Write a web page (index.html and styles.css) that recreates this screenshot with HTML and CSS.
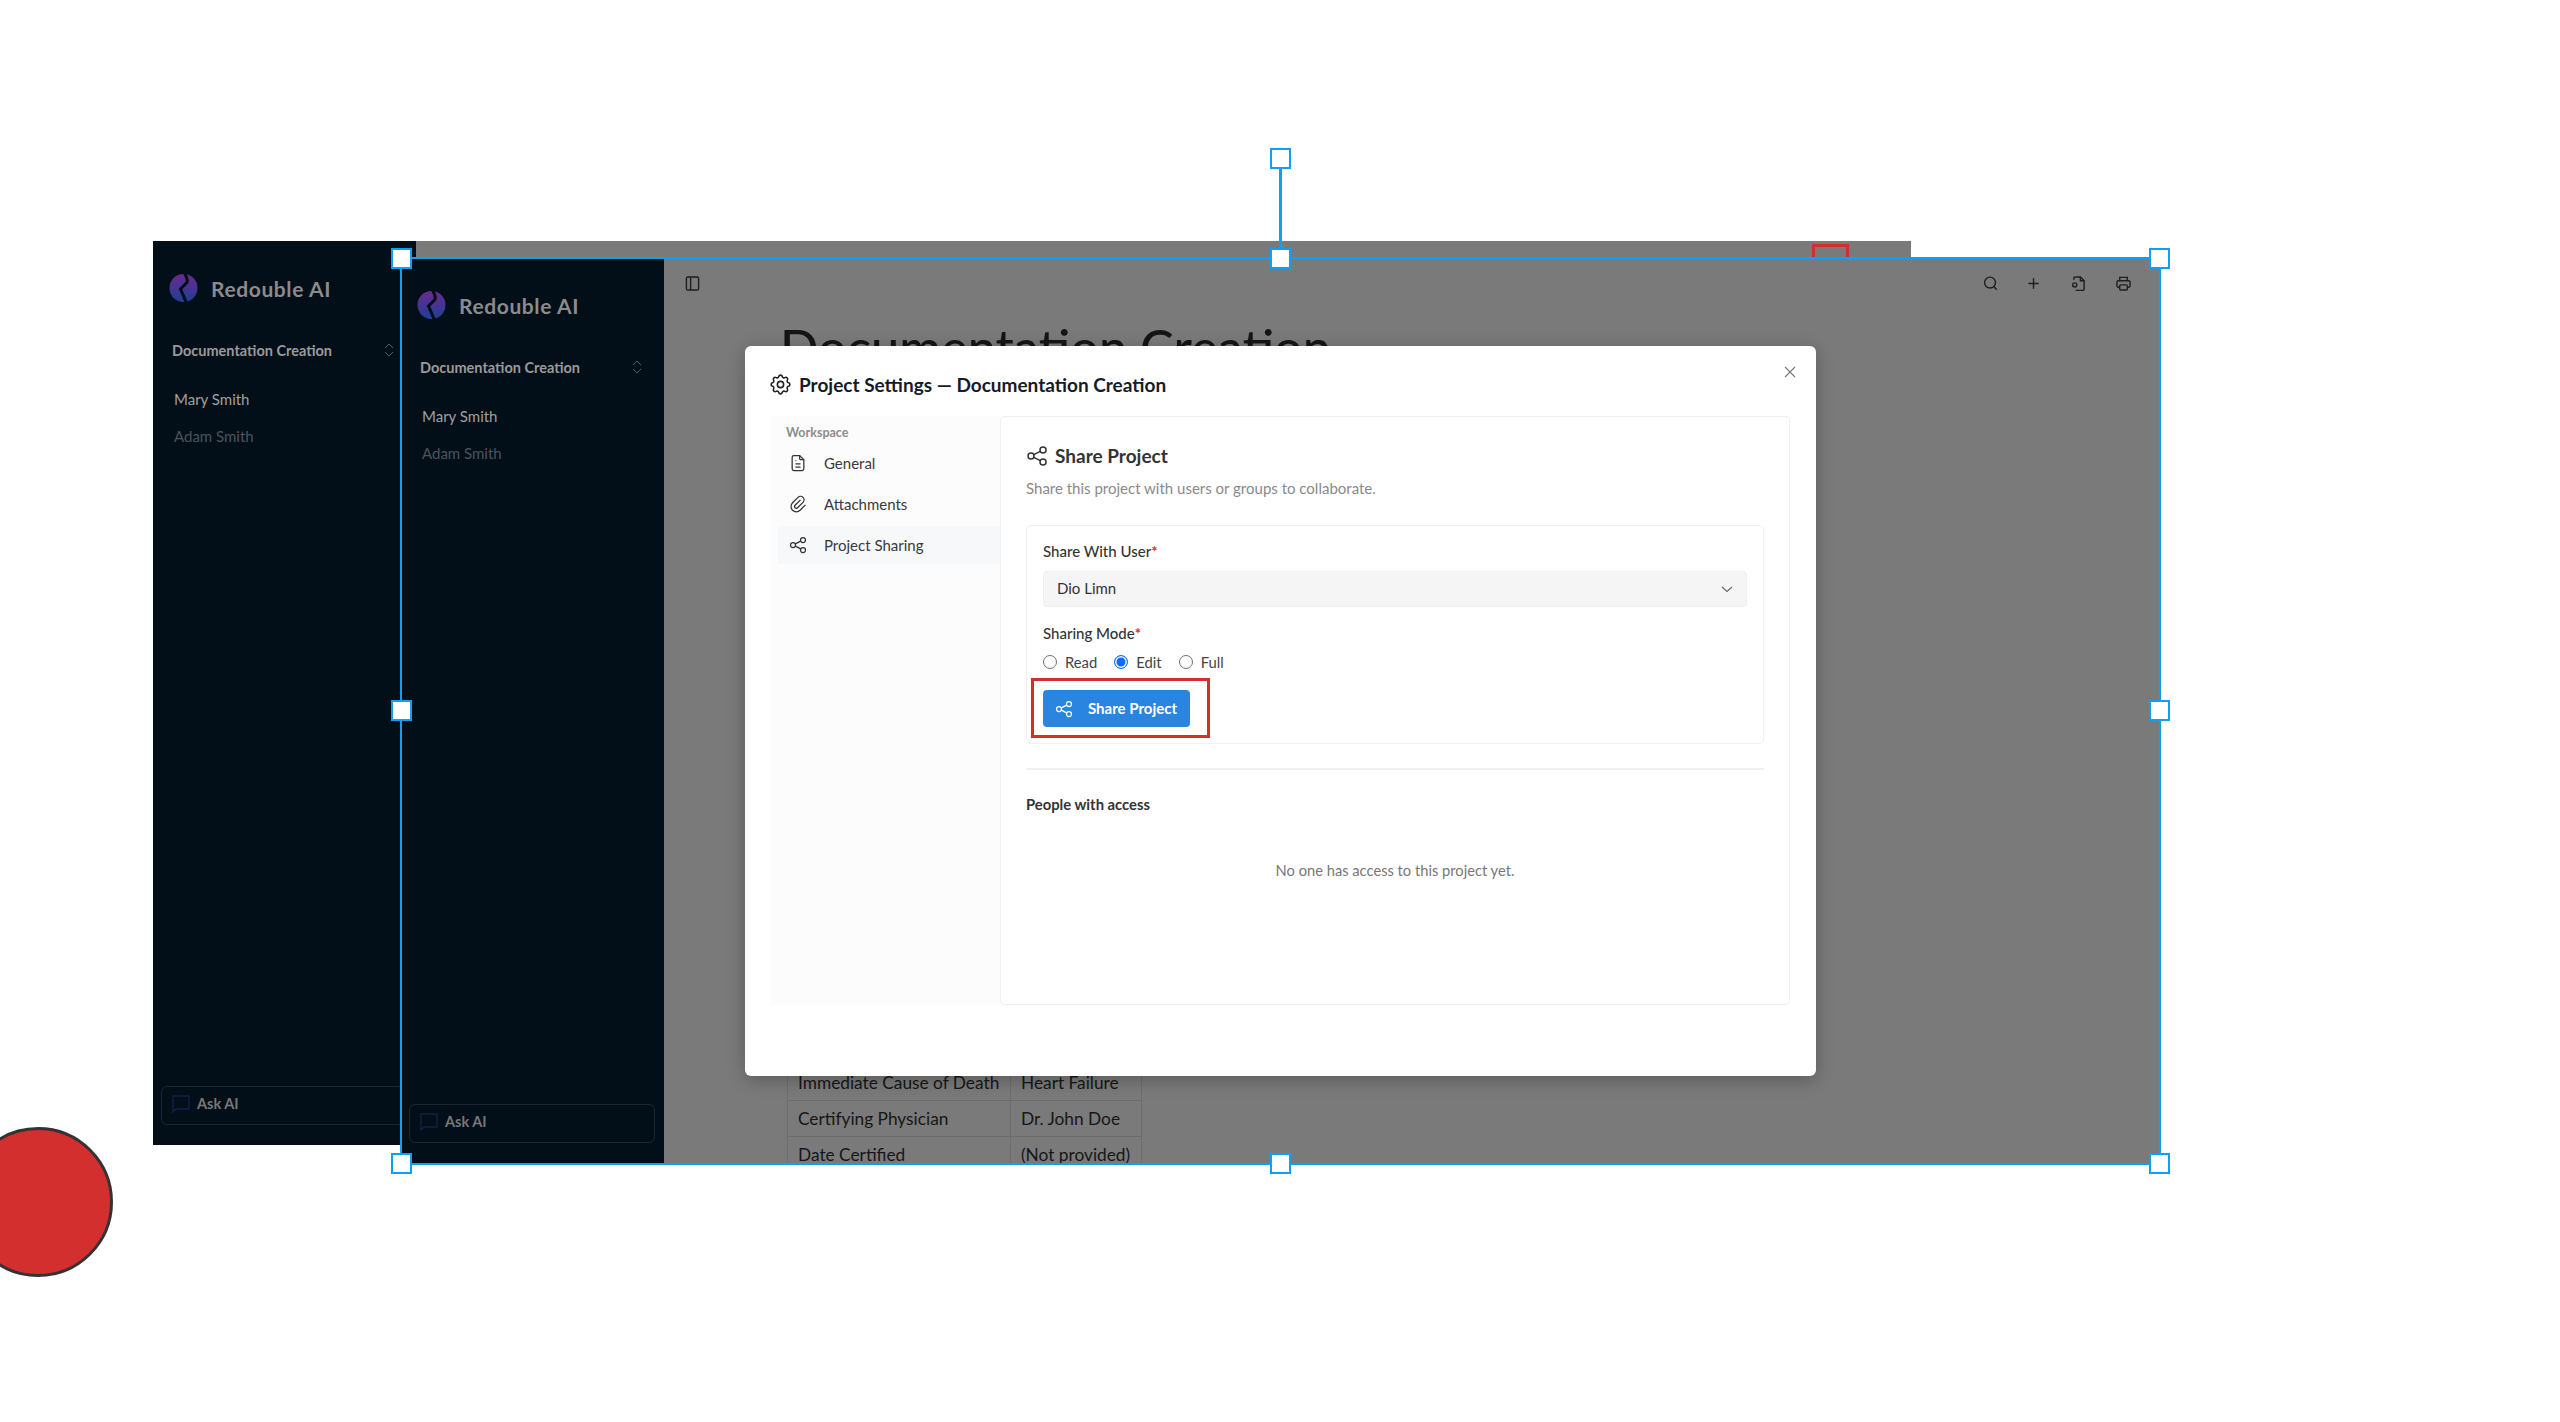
FILE: index.html
```html
<!DOCTYPE html>
<html lang="en">
<head>
<meta charset="utf-8">
<title>Project Settings</title>
<link rel="stylesheet" href="styles.css">
</head>
<body>
<svg class="defs" width="0" height="0" aria-hidden="true">
  <defs>
    <linearGradient id="logo-grad" x1="0" y1="0" x2="0" y2="1">
      <stop offset="0" stop-color="#6a2a8e"/>
      <stop offset="1" stop-color="#1f3f95"/>
    </linearGradient>
    <symbol id="share" viewBox="0 0 24 24">
      <circle cx="6" cy="12" r="3"/><circle cx="18" cy="6" r="3"/><circle cx="18" cy="18" r="3"/>
      <path d="M8.700 10.700l6.600-3.400M8.700 13.300l6.600 3.400"/>
    </symbol>
    <symbol id="logo" viewBox="0 0 28 28">
      <circle cx="14" cy="14" r="14" fill="url(#logo-grad)"/>
      <path d="M15 -1C17 3 19 7 17 9L11 15L17 29" fill="none" stroke="#020f18" stroke-width="3"/>
    </symbol>
    <symbol id="chat" viewBox="0 0 18 18">
      <path d="M1 1h16v13H4l-3 3z" fill="none" stroke="#1a1c4a" stroke-width="1.300"/>
    </symbol>
    <symbol id="updown" viewBox="0 0 10 14">
      <path d="M1 5l4-4 4 4M1 9l4 4 4-4" fill="none" stroke="#555b61" stroke-width="1"/>
    </symbol>
  </defs>
</svg>

<main class="canvas">
  <section class="shot shot-back">
    <aside class="sidebar">
      <div class="brand"><svg class="logo"><use href="#logo"/></svg><span>Redouble AI</span></div>
      <div class="project"><span>Documentation Creation</span><svg class="updown"><use href="#updown"/></svg></div>
      <ul class="people"><li>Mary Smith</li><li class="dim">Adam Smith</li></ul>
      <div class="ask"><svg class="chat"><use href="#chat"/></svg><span>Ask AI</span></div>
    </aside>
    <div class="pane">
      <div class="red-mark"></div>
    </div>
  </section>

  <section class="shot shot-front">
    <aside class="sidebar">
      <div class="brand"><svg class="logo"><use href="#logo"/></svg><span>Redouble AI</span></div>
      <div class="project"><span>Documentation Creation</span><svg class="updown"><use href="#updown"/></svg></div>
      <ul class="people"><li>Mary Smith</li><li class="dim">Adam Smith</li></ul>
      <div class="ask"><svg class="chat"><use href="#chat"/></svg><span>Ask AI</span></div>
    </aside>
    <div class="pane pane-front">
      <header class="toolbar">
        <svg class="tool" viewBox="0 0 16 16"><rect x="1.500" y="1" width="13" height="14" rx="1.500"/><path d="M6 1v14"/></svg>
        <div class="tools">
          <svg class="tool tool-search" viewBox="0 0 16 16"><circle cx="7.500" cy="7" r="5.800"/><path d="M11.600 11.200l3 3.400"/></svg>
          <svg class="tool" viewBox="0 0 16 16"><path d="M8 2.500v11M2.500 8h11"/></svg>
          <svg class="tool" viewBox="0 0 16 16"><path d="M3 4V2.500A1.500 1.500 0 0 1 4.500 1H10l4 4v9a1.500 1.500 0 0 1-1.500 1.500H5"/><path d="M10 1v4h4"/><circle cx="4" cy="9.500" r="2.200"/></svg>
          <svg class="tool" viewBox="0 0 16 16"><path d="M4 5V1.500h8V5M4 12H2.500A1.500 1.500 0 0 1 1 10.500v-4A1.500 1.500 0 0 1 2.500 5h11A1.500 1.500 0 0 1 15 6.500v4a1.500 1.500 0 0 1-1.500 1.500H12"/><rect x="4" y="9.500" width="8" height="5.500" rx="1"/></svg>
        </div>
      </header>
      <h1 class="doc-title">Documentation Creation</h1>
      <table class="doc-table">
        <tr><td>Immediate Cause of Death</td><td>Heart Failure</td></tr>
        <tr><td>Certifying Physician</td><td>Dr. John Doe</td></tr>
        <tr><td>Date Certified</td><td>(Not provided)</td></tr>
      </table>
    </div>
  </section>

  <section class="modal">
    <button class="close" aria-label="Close"><svg viewBox="0 0 12 12"><path d="M1 1l10 10M11 1L1 11"/></svg></button>
    <h2 class="modal-title">
      <svg class="gear" viewBox="0 0 24 24"><path d="M10.325 4.317c.426-1.756 2.924-1.756 3.350 0a1.724 1.724 0 0 0 2.573 1.066c1.543-.94 3.310.826 2.370 2.370a1.724 1.724 0 0 0 1.065 2.572c1.756.426 1.756 2.924 0 3.350a1.724 1.724 0 0 0-1.066 2.573c.94 1.543-.826 3.310-2.370 2.370a1.724 1.724 0 0 0-2.572 1.065c-.426 1.756-2.924 1.756-3.350 0a1.724 1.724 0 0 0-2.573-1.066c-1.543.94-3.310-.826-2.370-2.370a1.724 1.724 0 0 0-1.065-2.572c-1.756-.426-1.756-2.924 0-3.350a1.724 1.724 0 0 0 1.066-2.573c-.94-1.543.826-3.310 2.370-2.370c1 .608 2.296.07 2.572-1.065z"/><circle cx="12" cy="12" r="3"/></svg>
      <span>Project Settings — Documentation Creation</span>
    </h2>
    <div class="modal-body">
      <nav class="nav">
        <div class="nav-head">Workspace</div>
        <a class="nav-item"><svg class="nav-icon" viewBox="0 0 24 24"><path d="M14 3v4a1 1 0 0 0 1 1h4"/><path d="M17 21H7a2 2 0 0 1-2-2V5a2 2 0 0 1 2-2h7l5 5v11a2 2 0 0 1-2 2z"/><path d="M9 9h1M9 13h6M9 17h6"/></svg><span>General</span></a>
        <a class="nav-item"><svg class="nav-icon" viewBox="0 0 24 24"><path d="M15 7l-6.500 6.500a1.500 1.500 0 0 0 3 3l6.500-6.500a3 3 0 0 0-6-6l-6.500 6.500a4.500 4.500 0 0 0 9 9l6.500-6.500"/></svg><span>Attachments</span></a>
        <a class="nav-item active"><svg class="nav-icon"><use href="#share"/></svg><span>Project Sharing</span></a>
      </nav>
      <div class="content">
        <h3 class="content-title"><svg class="content-icon"><use href="#share"/></svg><span>Share Project</span></h3>
        <p class="content-sub">Share this project with users or groups to collaborate.</p>
        <form class="form-card">
          <label class="field-label">Share With User<b>*</b></label>
          <div class="select"><span>Dio Limn</span><svg viewBox="0 0 12 12"><path d="M1 4l5 4.500L11 4"/></svg></div>
          <label class="field-label mode-label">Sharing Mode<b>*</b></label>
          <div class="radios">
            <span class="radio"><i></i>Read</span>
            <span class="radio on"><i></i>Edit</span>
            <span class="radio"><i></i>Full</span>
          </div>
          <button class="share-btn" type="button"><svg class="btn-icon"><use href="#share"/></svg><span>Share Project</span></button>
          <div class="highlight"></div>
        </form>
        <hr class="divider">
        <div class="people-head">People with access</div>
        <div class="empty">No one has access to this project yet.</div>
      </div>
    </div>
  </section>

  <div class="rotate-line"></div>
  <div class="frame"></div>
  <span class="handle h-rot"></span>
  <span class="handle h-tl"></span><span class="handle h-tc"></span><span class="handle h-tr"></span>
  <span class="handle h-ml"></span><span class="handle h-mr"></span>
  <span class="handle h-bl"></span><span class="handle h-bc"></span><span class="handle h-br"></span>
  <div class="record-dot"></div>
</main>
</body>
</html>
```

FILE: styles.css
```css
* { box-sizing: border-box; }
html, body { margin: 0; padding: 0; background: #fff; }
body { font-family: "Lato", "Noto Sans", sans-serif; color: #1c1f26; }
.defs { position: absolute; }
.canvas { position: relative; width: 2560px; height: 1422px; overflow: hidden; background: #fff; }

/* slide objects on a free canvas */
.shot { position: absolute; display: flex; width: 1758px; overflow: hidden; background: #7a7a7a; }
.shot-back { left: 153px; top: 241px; height: 904px; }
.shot-front { left: 401px; top: 258px; height: 905px; }

.sidebar { width: 263px; flex: none; display: flex; flex-direction: column; background: #020f18; padding: 33px 9px 20px 8px; }
.brand { display: flex; align-items: center; gap: 13px; padding-left: 8px; height: 28px; color: #8b8b8b; font-size: 21px; font-weight: 700; letter-spacing: .6px; }
.logo { width: 29px; height: 28px; }
.project { display: flex; justify-content: space-between; align-items: center; margin-top: 35px; padding: 0 0 0 11px; height: 26px; color: #9a9a9a; font-size: 14.500px; font-weight: 700; }
.updown { width: 10px; height: 14px; margin-right: 13px; }
.people { list-style: none; margin: 18px 0 0; padding: 0 0 0 13px; flex: 1; font-size: 15px; color: #a0a0a0; }
.people li { height: 37px; line-height: 37px; }
.people .dim { color: #4e5358; }
.ask { display: flex; align-items: center; gap: 7px; height: 39px; padding: 0 0 4px 10px; border: 1px solid #1c2730; border-radius: 6px; color: #777; font-size: 14.500px; font-weight: 700; }
.chat { width: 18px; height: 18px; }

.pane { position: relative; flex: 1; min-width: 0; }
.red-mark { position: absolute; left: 1396px; top: 3px; width: 37px; height: 40px; border: 3px solid #cf2f2f; }

.toolbar { display: flex; justify-content: space-between; align-items: center; padding: 18px 28px 0 21px; }
.tools { display: flex; gap: 30px; }
.tool { width: 15px; height: 15px; fill: none; stroke: #1f1f1f; stroke-width: 1.500; display: block; }
.tool-search { margin-right: -2px; }
.doc-title { margin: 0; position: absolute; left: 116px; top: 57px; font-size: 50.500px; line-height: 64px; font-weight: 500; color: #151515; white-space: nowrap; }
.doc-table { position: absolute; left: 123px; top: 806px; border-collapse: collapse; font-size: 17.300px; color: #161616; }
.doc-table td { height: 36px; padding: 0 10px; border: 1px solid #6d6d6d; white-space: nowrap; }
.doc-table td:first-child { width: 223px; }
.doc-table td:last-child { width: 131px; }

/* dialog */
.modal { position: absolute; left: 745px; top: 346px; width: 1071px; height: 730px; display: flex; flex-direction: column; background: #fff; border-radius: 6px; box-shadow: 0 4px 18px rgba(0,0,0,.25); padding: 24px 26px 71px 25px; }
.close { position: absolute; right: 20px; top: 20px; width: 12px; height: 12px; padding: 0; background: none; border: 0; }
.close svg { display: block; width: 12px; height: 12px; fill: none; stroke: #777; stroke-width: 1.100; }
.modal-title { display: flex; align-items: center; gap: 6px; margin: 0 0 18px; height: 28px; font-size: 19px; font-weight: 700; color: #161b28; }
.gear { width: 25px; height: 25px; margin-left: -2px; fill: none; stroke: #222; stroke-width: 1.500; flex: none; }
.modal-body { flex: 1; display: flex; min-height: 0; }
.nav { width: 230px; flex: none; background: #fcfcfc; padding: 9px 0 0 8px; }
.nav-head { padding-left: 8px; height: 17px; font-size: 12.500px; font-weight: 700; color: #8c8c8c; }
.nav-item { display: flex; align-items: center; gap: 16px; height: 41px; padding-left: 10px; font-size: 15px; color: #3a3a3a; }
.nav-item.active { background: #f7f8f9; height: 38px; margin-top: 2px; }
.nav-icon { width: 20px; height: 20px; fill: none; stroke: #333; stroke-width: 1.500; flex: none; }
.content { flex: 1; min-width: 0; background: #fff; border: 1px solid #efefef; border-radius: 4px; padding: 25px 25px 0; }
.content-title { display: flex; align-items: center; gap: 6px; margin: 0; height: 26px; font-size: 19px; font-weight: 700; color: #333; }
.content-icon { width: 24px; height: 24px; margin-left: -1px; fill: none; stroke: #333; stroke-width: 1.500; margin-top: 2px; flex: none; }
.content-sub { margin: 9px 0 0; height: 22px; line-height: 22px; font-size: 15px; color: #8a8a8a; }
.form-card { position: relative; margin-top: 26px; height: 219px; padding: 14px 16px 0 16px; border: 1px solid #f0f0f0; border-radius: 5px; }
.field-label { display: block; height: 22px; line-height: 22px; font-size: 15px; font-weight: 500; color: #333; }
.field-label b { color: #d32f2f; font-weight: 700; }
.select { display: flex; justify-content: space-between; align-items: center; height: 36px; margin-top: 9px; padding: 0 13px 2px 13px; background: #f5f5f5; border: 1px solid #efefef; border-radius: 4px; font-size: 15px; color: #333; }
.select svg { width: 12px; height: 12px; fill: none; stroke: #666; stroke-width: 1.100; margin-top: 2px; }
.mode-label { margin-top: 15px; }
.radios { display: flex; gap: 17px; margin-top: 8px; height: 20px; align-items: center; font-size: 14.800px; color: #444; }
.radio { display: flex; align-items: center; gap: 8px; }
.radio i { width: 14px; height: 14px; border: 1px solid #6f6f6f; border-radius: 50%; background: #fff; display: block; }
.radio.on i { border: 1.500px solid #1a73e8; box-shadow: inset 0 0 0 1.500px #fff; background: #0d6efd; }
.share-btn { display: flex; align-items: center; gap: 14px; width: 147px; height: 37px; margin-top: 18px; padding: 0 0 2px 11px; background: #2a85e0; border: 0; border-radius: 4px; color: #fff; font: 700 15px "Lato", sans-serif; }
.btn-icon { width: 20px; height: 20px; fill: none; stroke: #fff; stroke-width: 1.500; flex: none; margin-top: 2px; }
.highlight { position: absolute; left: 4px; top: 152px; width: 179px; height: 60px; border: 3px solid #d32f2f; }
.divider { margin: 24px 0 0; height: 2px; background: #f0f0f0; border: 0; }
.people-head { margin-top: 25px; height: 18px; line-height: 18px; font-size: 14.800px; font-weight: 700; color: #333; }
.empty { margin-top: 48px; text-align: center; font-size: 14.700px; line-height: 18px; color: #777; }

/* selection frame */
.frame { position: absolute; left: 400px; top: 257px; width: 1760.500px; height: 907.500px; border: 2.500px solid #109ff5; }
.rotate-line { position: absolute; left: 1279px; top: 158px; width: 2.500px; height: 100px; background: #109ff5; }
.handle { position: absolute; width: 21px; height: 21px; margin: -10px 0 0 -10px; background: #fff; border: 2.500px solid #109ff5; }
.h-rot { left: 1280px; top: 158px; }
.h-tl { left: 401px; top: 258px; }
.h-tc { left: 1280px; top: 258px; }
.h-tr { left: 2159px; top: 258px; }
.h-ml { left: 401px; top: 710px; }
.h-mr { left: 2159px; top: 710px; }
.h-bl { left: 401px; top: 1163px; }
.h-bc { left: 1280px; top: 1163px; }
.h-br { left: 2159px; top: 1163px; }
.record-dot { position: absolute; left: -37px; top: 1127px; width: 150px; height: 150px; border-radius: 50%; background: #d32f2f; border: 3px solid #333; }
```
